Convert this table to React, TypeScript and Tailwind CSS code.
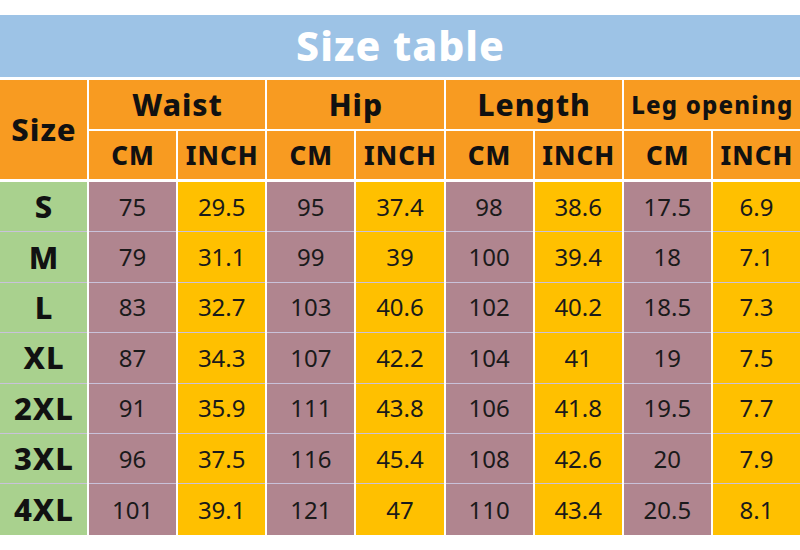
import React from "react";

const rows: [string, string, string, string, string, string, string, string, string][] = [
  ["S", "75", "29.5", "95", "37.4", "98", "38.6", "17.5", "6.9"],
  ["M", "79", "31.1", "99", "39", "100", "39.4", "18", "7.1"],
  ["L", "83", "32.7", "103", "40.6", "102", "40.2", "18.5", "7.3"],
  ["XL", "87", "34.3", "107", "42.2", "104", "41", "19", "7.5"],
  ["2XL", "91", "35.9", "111", "43.8", "106", "41.8", "19.5", "7.7"],
  ["3XL", "96", "37.5", "116", "45.4", "108", "42.6", "20", "7.9"],
  ["4XL", "101", "39.1", "121", "47", "110", "43.4", "20.5", "8.1"],
];

const groups = ["Waist", "Hip", "Length", "Leg opening"];

export default function App() {
  return (
    <div
      className="w-[800px] h-[550px] bg-white pt-[15px] overflow-hidden"
      style={{ fontFamily: '"Noto Sans", "Open Sans", sans-serif' }}
    >
      <div className="h-[62px] bg-[#9dc3e6] flex items-center justify-center text-white font-extrabold text-[41px] leading-none tracking-[1px] pl-[1px] pb-[2px]">
        Size table
      </div>
      <div className="mt-[3px] grid grid-cols-[87px_repeat(8,1fr)] gap-x-[2px] bg-white w-[800px]">
        <div className="row-span-2 bg-[#f89b21] flex items-center justify-center font-extrabold text-[31px] tracking-[1px] pl-[1px] text-[#111] leading-none">
          Size
        </div>
        {groups.map((g) => (
          <div
            key={g}
            className={`col-span-2 h-[49px] bg-[#f89b21] flex items-center justify-center font-extrabold text-[#111] leading-none ${
              g === "Leg opening" ? "text-[24px] tracking-[1.2px] pl-[1px]" : "text-[30px] tracking-[1px] pl-[1px]"
            }`}
          >
            {g}
          </div>
        ))}
        {groups.map((g) => (
          <React.Fragment key={g + "-u"}>
            <div className="mt-[2px] h-[48px] bg-[#f89b21] flex items-center justify-center font-extrabold text-[26px] tracking-[1px] pl-[1px] text-[#111] leading-none">
              CM
            </div>
            <div className="mt-[2px] h-[48px] bg-[#f89b21] flex items-center justify-center font-extrabold text-[26px] tracking-[1px] pl-[1px] text-[#111] leading-none">
              INCH
            </div>
          </React.Fragment>
        ))}
        {rows.map((r, ri) => {
          const last = ri === rows.length - 1;
          const border = last ? "" : "border-b border-[#c9c2da]";
          const top = ri === 0 ? "mt-[3px]" : "";
          return (
            <React.Fragment key={r[0]}>
              <div
                className={`${top} h-[50.4px] bg-[#a9d18e] ${border} flex items-center justify-center font-extrabold text-[31px] tracking-[1px] pl-[1px] text-[#111] leading-none`}
              >
                {r[0]}
              </div>
              {r.slice(1).map((v, i) => (
                <div
                  key={i}
                  className={`${top} h-[50.4px] ${i % 2 === 0 ? "bg-[#b0858f]" : "bg-[#ffc000]"} ${border} flex items-center justify-center text-[24px] text-[#1a1a1a] leading-none`}
                >
                  {v}
                </div>
              ))}
            </React.Fragment>
          );
        })}
      </div>
    </div>
  );
}
